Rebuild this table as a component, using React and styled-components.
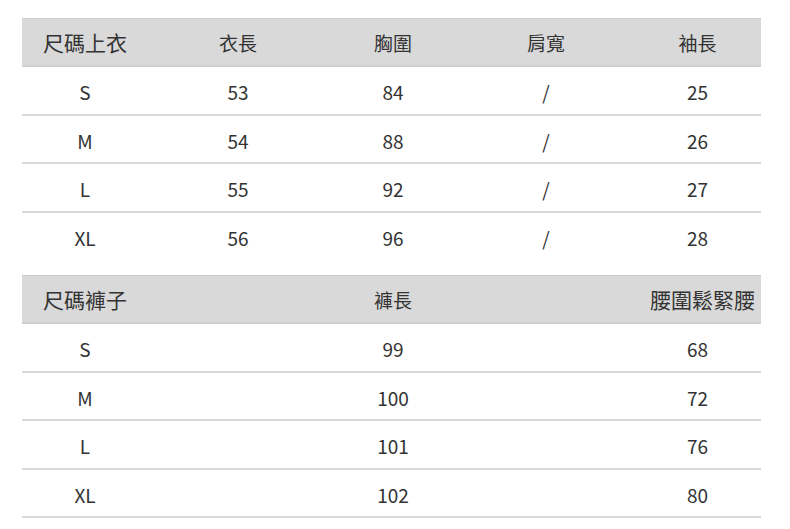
import React from "react";
import styled, { createGlobalStyle } from "styled-components";

const Global = createGlobalStyle`
  html, body { margin: 0; padding: 0; background: #ffffff; }
  body { font-family: "Noto Sans CJK TC", "Noto Sans", sans-serif; color: #333333; }
`;

const Page = styled.div`
  width: 790px;
  height: 529px;
  padding: 18px 0 0 22px;
  box-sizing: border-box;
  display: flex;
  flex-direction: column;
  gap: 14px;
`;

const Table = styled.div`
  width: 739px;
  display: flex;
  flex-direction: column;
`;

const GRID = "126px 180px 130px 176px 127px";

const HeaderRow = styled.div`
  display: grid;
  grid-template-columns: ${GRID};
  height: 49px;
  box-sizing: border-box;
  background: #d9d9d9;
  border-top: 1.5px solid #cccccc;
  border-bottom: 2px solid #cfcfcf;
  align-items: center;
`;

const Row = styled.div`
  display: grid;
  grid-template-columns: ${GRID};
  height: 48.5px;
  box-sizing: border-box;
  border-bottom: ${(p) => (p.$last ? "2px solid transparent" : "2px solid #d9d9d9")};
  align-items: center;
`;

const HeadCell = styled.div`
  grid-column: ${(p) => p.$col};
  font-family: "Noto Sans CJK TC", "Noto Sans", sans-serif;
  font-size: ${(p) => (p.$big ? "21px" : "19px")};
  text-align: ${(p) => (p.$left ? "left" : "center")};
  padding-left: ${(p) => (p.$left ? "21px" : "0")};
  white-space: nowrap;
  color: #333333;
  line-height: 1;
  ${(p) => (p.$shift ? `transform: translateX(${p.$shift}px);` : "")}
`;

const Cell = styled.div`
  grid-column: ${(p) => p.$col};
  font-family: "Noto Sans CJK TC", "Noto Sans", sans-serif;
  font-size: 19px;
  text-align: center;
  color: #333333;
  line-height: 1;
  padding-top: 3px;
  white-space: nowrap;
`;

const tops = [
  ["S", "53", "84", "/", "25"],
  ["M", "54", "88", "/", "26"],
  ["L", "55", "92", "/", "27"],
  ["XL", "56", "96", "/", "28"],
];

const pants = [
  ["S", "99", "68"],
  ["M", "100", "72"],
  ["L", "101", "76"],
  ["XL", "102", "80"],
];

export default function App() {
  return (
    <>
      <Global />
      <Page>
        <Table>
          <HeaderRow>
            <HeadCell $col={1} $left $big>尺碼上衣</HeadCell>
            <HeadCell $col={2}>衣長</HeadCell>
            <HeadCell $col={3}>胸圍</HeadCell>
            <HeadCell $col={4}>肩寬</HeadCell>
            <HeadCell $col={5}>袖長</HeadCell>
          </HeaderRow>
          {tops.map((r, i) => (
            <Row key={r[0]} $last={i === tops.length - 1}>
              {r.map((v, j) => (
                <Cell key={j} $col={j + 1}>{v}</Cell>
              ))}
            </Row>
          ))}
        </Table>
        <Table>
          <HeaderRow>
            <HeadCell $col={1} $left $big>尺碼褲子</HeadCell>
            <HeadCell $col={3}>褲長</HeadCell>
            <HeadCell $col={5} $big $shift={5}>腰圍鬆緊腰</HeadCell>
          </HeaderRow>
          {pants.map((r) => (
            <Row key={r[0]}>
              <Cell $col={1}>{r[0]}</Cell>
              <Cell $col={3}>{r[1]}</Cell>
              <Cell $col={5}>{r[2]}</Cell>
            </Row>
          ))}
        </Table>
      </Page>
    </>
  );
}
